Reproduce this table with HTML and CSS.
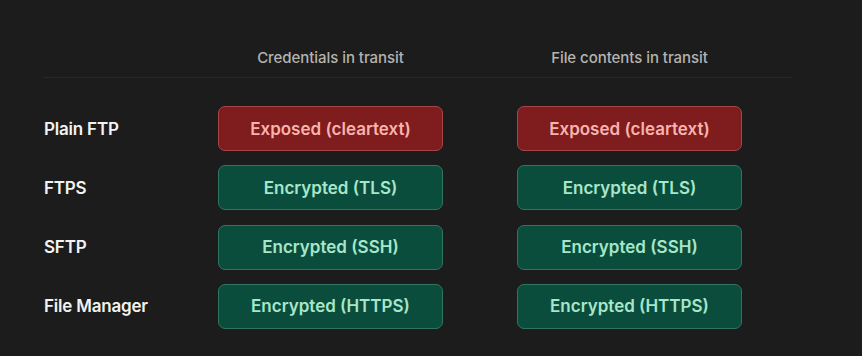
FILE: index.html
```html
<!DOCTYPE html>
<html lang="en">
<head>
<meta charset="utf-8">
<title>Transit encryption</title>
<link rel="stylesheet" href="styles.css">
</head>
<body>
<div class="table">
  <div class="head">
    <div></div>
    <div class="hcell">Credentials in transit</div>
    <div class="hcell">File contents in transit</div>
  </div>
  <div class="rows">
    <div class="label">Plain FTP</div>
    <div class="cell bad">Exposed (cleartext)</div>
    <div class="cell bad">Exposed (cleartext)</div>

    <div class="label">FTPS</div>
    <div class="cell good">Encrypted (TLS)</div>
    <div class="cell good">Encrypted (TLS)</div>

    <div class="label">SFTP</div>
    <div class="cell good">Encrypted (SSH)</div>
    <div class="cell good">Encrypted (SSH)</div>

    <div class="label">File Manager</div>
    <div class="cell good">Encrypted (HTTPS)</div>
    <div class="cell good">Encrypted (HTTPS)</div>
  </div>
</div>
</body>
</html>
```

FILE: styles.css
```css
html, body {
  margin: 0;
  padding: 0;
  background: #1c1c1c;
}
body {
  font-family: Inter, "Noto Sans", sans-serif;
  width: 862px;
  height: 356px;
  overflow: hidden;
}
.table {
  padding: 48px 0 0 43px;
}
.head {
  display: grid;
  grid-template-columns: 101px 225px 225px;
  column-gap: 74px;
  width: 750px;
  padding-bottom: 9px;
  border-bottom: 1px solid #272727;
}
.hcell {
  text-align: center;
  font-size: 15px;
  line-height: 20px;
  font-weight: 500;
  color: #b4b4b0;
  letter-spacing: -0.05px;
}
.rows {
  display: grid;
  grid-template-columns: 101px 225px 225px;
  grid-auto-rows: 45px;
  column-gap: 74px;
  row-gap: 14.33px;
  margin-top: 28px;
}
.label {
  display: flex;
  align-items: center;
  padding-left: 1px;
  font-size: 17px;
  font-weight: 600;
  color: #f2f2f0;
  letter-spacing: -0.2px;
  white-space: nowrap;
}
.cell {
  display: flex;
  align-items: center;
  justify-content: center;
  border-radius: 7px;
  font-size: 17px;
  font-weight: 600;
  letter-spacing: 0px;
  box-sizing: border-box;
}
.bad {
  background: #7e1c1e;
  border: 1px solid #a4474a;
  color: #f9b3ad;
}
.good {
  background: #0b4d3c;
  border: 1px solid #2f7560;
  color: #a6e6c9;
}
```
